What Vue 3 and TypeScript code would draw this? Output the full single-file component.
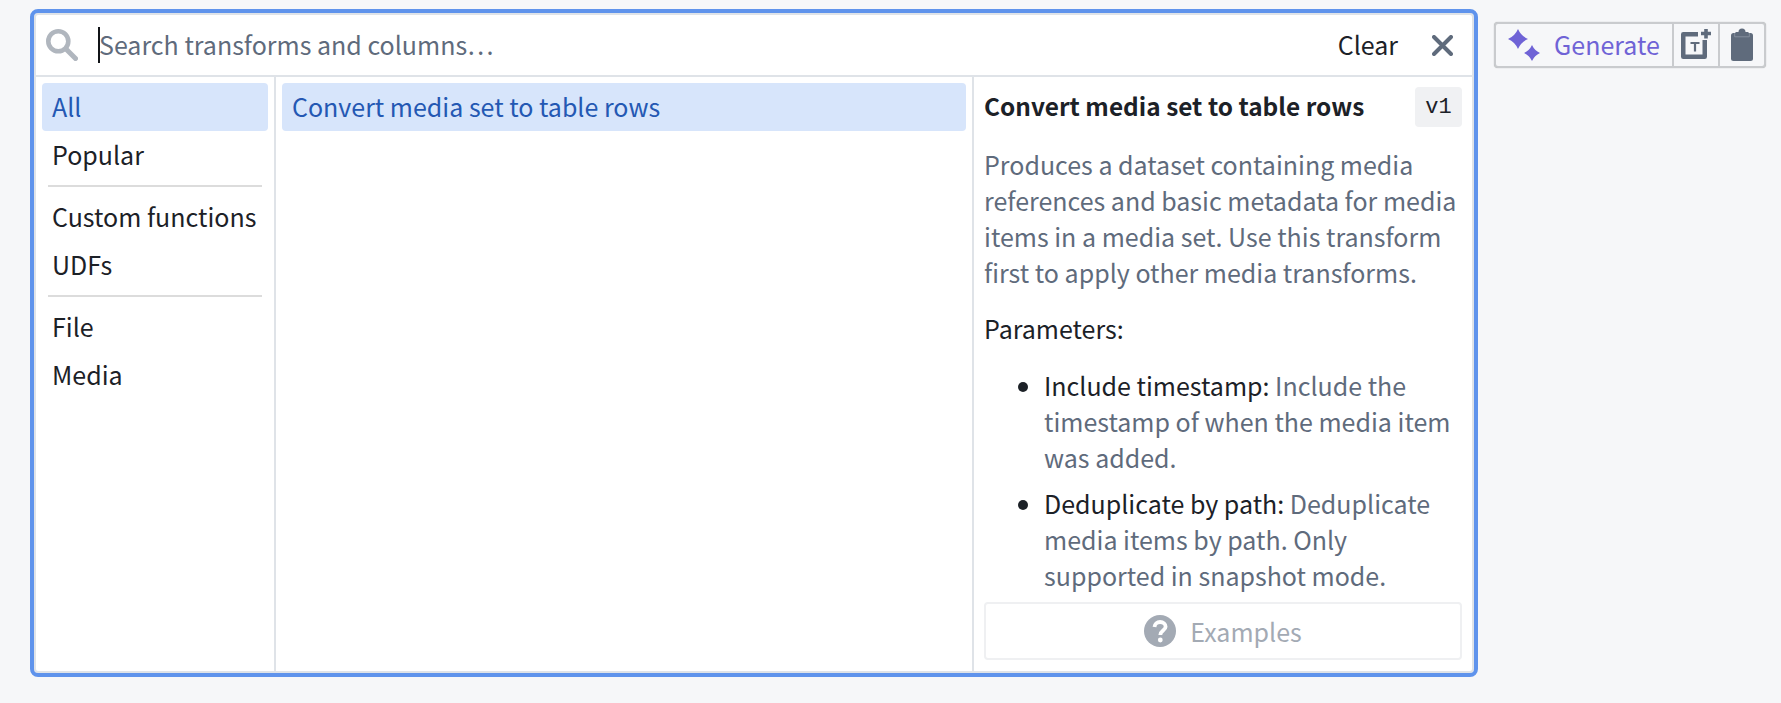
<script setup lang="ts">
const groups: string[][] = [['All', 'Popular'], ['Custom functions', 'UDFs'], ['File', 'Media']]
</script>

<template>
  <div class="page">
    <section class="picker">
      <header class="search">
        <svg class="search-icon" viewBox="0 0 32 32" aria-hidden="true">
          <circle cx="12.300" cy="12.300" r="10" fill="none" stroke="#b0b6be" stroke-width="4.600" />
          <path d="M21 21l8.500 8.500" stroke="#b0b6be" stroke-width="5" stroke-linecap="round" />
        </svg>
        <span class="caret"></span>
        <span class="placeholder">Search transforms and columns…</span>
        <span class="clear">Clear</span>
        <svg class="close" viewBox="0 0 21 21" aria-hidden="true">
          <path d="M2 2l17 17M19 2L2 19" stroke="#5f6b7c" stroke-width="4" stroke-linecap="round" />
        </svg>
      </header>
      <div class="panes">
        <nav class="categories">
          <template v-for="(group, i) in groups" :key="i">
            <hr v-if="i > 0" class="rule" />
            <div v-for="name in group" :key="name" class="item" :class="{ active: name === 'All' }">{{ name }}</div>
          </template>
        </nav>
        <div class="results">
          <div class="item active">Convert media set to table rows</div>
        </div>
        <aside class="detail">
          <div class="scroll">
            <div class="title-row">
              <h3 class="title">Convert media set to table rows</h3>
              <span class="version">v1</span>
            </div>
            <p class="desc">Produces a dataset containing media references and basic metadata for media items in a media set. Use this transform first to apply other media transforms.</p>
            <p class="params">Parameters:</p>
            <ul class="list">
              <li>Include timestamp: <span class="muted">Include the timestamp of when the media item was added.</span></li>
              <li>Deduplicate by path: <span class="muted">Deduplicate media items by path. Only supported in snapshot mode.</span></li>
            </ul>
          </div>
          <div class="examples">
            <svg class="help" viewBox="0 0 32 32" aria-hidden="true">
              <circle cx="16" cy="16" r="16" fill="#a3aab4" />
              <path d="M10.500 12c.2-3 2.500-5 5.600-5 3.200 0 5.500 2 5.500 4.700 0 3.800-5.300 4-5.300 8.300" fill="none" stroke="#fff" stroke-width="3.800" />
              <circle cx="16.300" cy="25" r="2.400" fill="#fff" />
            </svg>
            <span>Examples</span>
          </div>
        </aside>
      </div>
    </section>
    <div class="toolbar">
      <div class="tool generate">
        <svg class="sparkle" viewBox="0 0 32 32" aria-hidden="true">
          <path d="M10 0Q13 7 20 10 13 13 10 20 7 13 0 10 7 7 10 0z" fill="#6f63d6" />
          <path d="M24 16Q26.500 21.500 32 24 26.500 26.500 24 32 21.500 26.500 16 24 21.500 21.500 24 16z" fill="#6f63d6" />
        </svg>
        <span class="label">Generate</span>
      </div>
      <div class="tool icon-tool">
        <svg class="note" viewBox="0 0 34 38" aria-hidden="true">
          <path d="M19 8.250H4.250V30.750H25.750V14" fill="none" stroke="#5f6b7c" stroke-width="4.500" stroke-linejoin="round" />
          <path d="M11.500 17h9M16 17v8.500" fill="none" stroke="#5f6b7c" stroke-width="2.200" />
          <path d="M27 3v9.500M22 7.500h10" stroke="#5f6b7c" stroke-width="3.600" />
        </svg>
      </div>
      <div class="tool icon-tool">
        <svg class="clip" viewBox="0 0 22 34" aria-hidden="true">
          <rect x="0" y="5" width="22" height="28" rx="2.500" fill="#5f6b7c" />
          <path d="M4.500 8V4H7.500a3.500 3.500 0 0 1 7 0H17.500V8z" fill="#5f6b7c" />
          <path d="M3.700 5v3.800H18.300V5" fill="none" stroke="#8e97a4" stroke-width=".8" />
        </svg>
      </div>
    </div>
  </div>
</template>

<style>
html, body { margin: 0; background: #f6f7f9; }
</style>

<style scoped>
.page {
  display: flex;
  align-items: flex-start;
  height: 703px;
  box-sizing: border-box;
  padding: 9px 0 0 30px;
  background: #f6f7f9;
  font-family: "Noto Sans CJK SC", "Noto Sans", sans-serif;
  font-size: 25px;
  color: #1c2127;
  overflow: hidden;
}
.picker {
  width: 1448px;
  height: 668px;
  box-sizing: border-box;
  display: flex;
  flex-direction: column;
  background: #fff;
  border: 4px solid #5f93ec;
  border-radius: 8px;
  box-shadow: inset 0 0 0 2px #dfe3e8;
}
.search {
  flex: none;
  height: 64px;
  box-sizing: border-box;
  display: flex;
  align-items: center;
  padding: 2px 21px 0 12px;
  border-bottom: 2px solid #dfe3e8;
}
.search-icon { width: 32px; height: 32px; flex: none; }
.caret { width: 2px; height: 36px; background: #111418; margin-left: 20px; flex: none; }
.placeholder { color: #5f6b7c; margin-left: -1px; flex: 1; padding-bottom: 2px; }
.clear { margin-right: 34px; padding-bottom: 2px; }
.close { width: 21px; height: 21px; flex: none; }
.panes { flex: 1; min-height: 0; display: flex; margin: 0 2px 2px; }
.categories {
  width: 240px;
  box-sizing: border-box;
  padding: 6px 6px 0 6px;
  border-right: 2px solid #dfe3e8;
  flex: none;
}
.item { height: 48px; line-height: 46px; padding: 0 10px; border-radius: 4px; white-space: nowrap; }
.item.active { background: #d7e5fb; color: #2458b3; }
.rule { height: 2px; border: 0; background: #dcdcdc; margin: 6px 6px; }
.results { width: 698px; box-sizing: border-box; padding: 6px 6px 0; border-right: 2px solid #dfe3e8; flex: none; }
.detail { flex: 1; min-width: 0; box-sizing: border-box; padding: 0 10px 11px; display: flex; flex-direction: column; }
.scroll { flex: 1; min-height: 0; overflow: hidden; }
.title-row { display: flex; align-items: center; justify-content: space-between; height: 40px; margin-top: 10px; }
.title { margin: 0; font-size: 24.400px; font-weight: 700; line-height: 38px; padding-bottom: 2px; }
.version { width: 47px; height: 40px; line-height: 41px; text-align: center; background: #f0f1f3; border-radius: 4px; font-family: "Liberation Mono", monospace; font-size: 22px; }
.desc { margin: 19px 0 0; line-height: 36px; color: #5f6b7c; }
.params { margin: 20px 0 0; line-height: 36px; }
.list { margin: 21px 0 0; padding: 0 0 0 60px; line-height: 36px; }
.list li + li { margin-top: 10px; }
.muted { color: #5f6b7c; }
.examples {
  flex: none;
  height: 58px;
  box-sizing: border-box;
  border: 2px solid #eff0f2;
  border-radius: 4px;
  display: flex;
  align-items: center;
  justify-content: center;
  gap: 14px;
  color: #a3aab4;
}
.help { width: 32px; height: 32px; }
.toolbar {
  display: flex;
  margin: 13px 0 0 16px;
  height: 46px;
  box-sizing: border-box;
  border: 2px solid #c9cbce;
  border-radius: 4px;
  background: #f6f7f9;
  box-shadow: 0 0 1px rgba(0, 0, 0, 0.35);
}
.tool { display: flex; align-items: center; justify-content: center; box-sizing: border-box; }
.tool + .tool { border-left: 2px solid #c9cbce; }
.generate { width: 176px; gap: 14px; color: #6f63d6; }
.label { padding-bottom: 2px; }
.sparkle { width: 32px; height: 32px; }
.icon-tool { width: 46px; }
.note { width: 34px; height: 38px; flex: none; }
.clip { width: 22px; height: 34px; flex: none; }
</style>
